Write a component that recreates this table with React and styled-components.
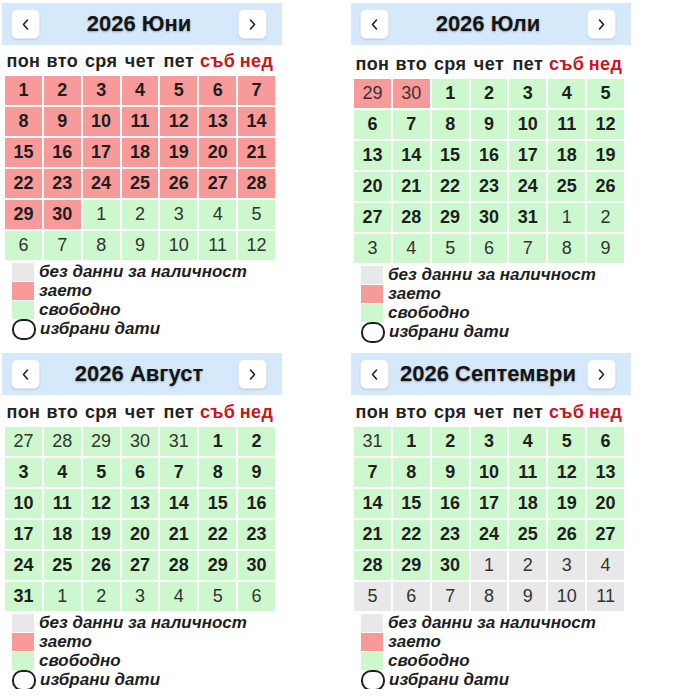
import React from 'react';
import styled, { createGlobalStyle } from 'styled-components';

const GlobalStyle = createGlobalStyle`
  body {
    margin: 0;
    background: #ffffff;
    font-family: "Liberation Sans", Arial, sans-serif;
    color: #222;
  }
`;

const colors = {
  busy: '#f99a9a',
  free: '#cdf8cd',
  none: '#e8e8e8',
};

const Page = styled.div`
  display: grid;
  grid-template-columns: 280px 280px;
  column-gap: 69px;
  row-gap: 12px;
  padding: 3px 0 0 2px;
`;

const Calendar = styled.div`
  width: 280px;
`;

const Header = styled.div`
  height: 42px;
  background: #d6e9fb;
  display: flex;
  align-items: center;
  padding: 0 15px 0 9px;
  box-sizing: border-box;
`;

const NavButton = styled.button`
  width: 29px;
  height: 30px;
  padding: 0;
  border: 1px solid #e2e8ef;
  border-radius: 6px;
  background: #ffffff;
  box-shadow: 0 1px 2px rgba(0, 0, 0, 0.12);
  display: flex;
  align-items: center;
  justify-content: center;
  color: #222;
`;

const Title = styled.div`
  flex: 1;
  text-align: center;
  font-size: 22px;
  font-weight: 700;
  color: #151515;
  text-shadow: 0 1px 2px rgba(0, 0, 0, 0.3);
`;

const DayGrid = styled.div`
  display: grid;
  grid-template-columns: repeat(7, 1fr);
  column-gap: 2px;
  row-gap: 2px;
  width: 270px;
  margin-left: 3px;
`;

const WeekRow = styled(DayGrid)`
  height: ${p => 31 + p.$shift}px;
  padding-top: ${p => p.$shift + 1}px;
  box-sizing: border-box;
  align-items: center;
`;

const WeekDay = styled.div`
  text-align: center;
  font-size: 18px;
  font-weight: 700;
  letter-spacing: 0.4px;
  color: ${p => (p.$weekend ? '#c8161d' : '#222')};
`;

const Day = styled.div`
  height: 29px;
  display: flex;
  align-items: center;
  justify-content: center;
  font-size: 18px;
  font-weight: ${p => (p.$current ? 700 : 400)};
  color: ${p => (p.$current ? '#1e1e1e' : '#333')};
  background: ${p => colors[p.$status]};
`;

const Legend = styled.div`
  margin-top: 2px;
  padding-left: 10px;
`;

const LegendRow = styled.div`
  display: flex;
  align-items: center;
  gap: 4px;
  height: 19px;
  font-size: 17px;
  font-weight: 700;
  font-style: italic;
  color: #1e1e1e;
`;

const Swatch = styled.span`
  width: 22px;
  height: 18px;
  margin-right: 1px;
  background: ${p => colors[p.$status]};
`;

const Ring = styled.span`
  width: 24px;
  height: 21px;
  box-sizing: border-box;
  border: 2px solid #1e1e1e;
  border-radius: 10px;
  margin-top: 2px;
`;

const Chevron = ({ dir }) => (
  <svg width="9" height="13" viewBox="0 0 9 13">
    <polyline
      points={dir === 'left' ? '6.5,2 2.5,6.5 6.5,11' : '2.5,2 6.5,6.5 2.5,11'}
      fill="none"
      stroke="#222"
      strokeWidth="1.6"
      strokeLinecap="round"
      strokeLinejoin="round"
    />
  </svg>
);

const weekDays = ['пон', 'вто', 'сря', 'чет', 'пет', 'съб', 'нед'];

// builds 6 weeks starting from monday before the 1st
const buildDays = (year, month, statusOf) => {
  const first = new Date(year, month, 1);
  const offset = (first.getDay() + 6) % 7;
  const days = [];
  for (let i = 0; i < 42; i++) {
    const d = new Date(year, month, 1 - offset + i);
    days.push({
      date: d.getDate(),
      current: d.getMonth() === month,
      status: statusOf(d),
    });
  }
  return days;
};

const months = [
  {
    title: '2026 Юни',
    month: 5,
    shift: 0,
    statusOf: d => (d.getMonth() === 5 ? 'busy' : 'free'),
  },
  {
    title: '2026 Юли',
    month: 6,
    shift: 3,
    statusOf: d => (d.getMonth() === 5 ? 'busy' : 'free'),
  },
  {
    title: '2026 Август',
    month: 7,
    shift: 1,
    statusOf: () => 'free',
  },
  {
    title: '2026 Септември',
    month: 8,
    shift: 1,
    statusOf: d => (d.getMonth() >= 9 ? 'none' : 'free'),
  },
];

const MonthCalendar = ({ title, month, shift, statusOf }) => {
  const days = buildDays(2026, month, statusOf);
  return (
    <Calendar>
      <Header>
        <NavButton><Chevron dir="left" /></NavButton>
        <Title>{title}</Title>
        <NavButton><Chevron dir="right" /></NavButton>
      </Header>
      <WeekRow $shift={shift}>
        {weekDays.map((w, i) => (
          <WeekDay key={w} $weekend={i > 4}>{w}</WeekDay>
        ))}
      </WeekRow>
      <DayGrid>
        {days.map((d, i) => (
          <Day key={i} $status={d.status} $current={d.current}>{d.date}</Day>
        ))}
      </DayGrid>
      <Legend>
        <LegendRow><Swatch $status="none" />без данни за наличност</LegendRow>
        <LegendRow><Swatch $status="busy" />заето</LegendRow>
        <LegendRow><Swatch $status="free" />свободно</LegendRow>
        <LegendRow><Ring />избрани дати</LegendRow>
      </Legend>
    </Calendar>
  );
};

const App = () => (
  <>
    <GlobalStyle />
    <Page>
      {months.map(m => (
        <MonthCalendar key={m.title} {...m} />
      ))}
    </Page>
  </>
);

export default App;
